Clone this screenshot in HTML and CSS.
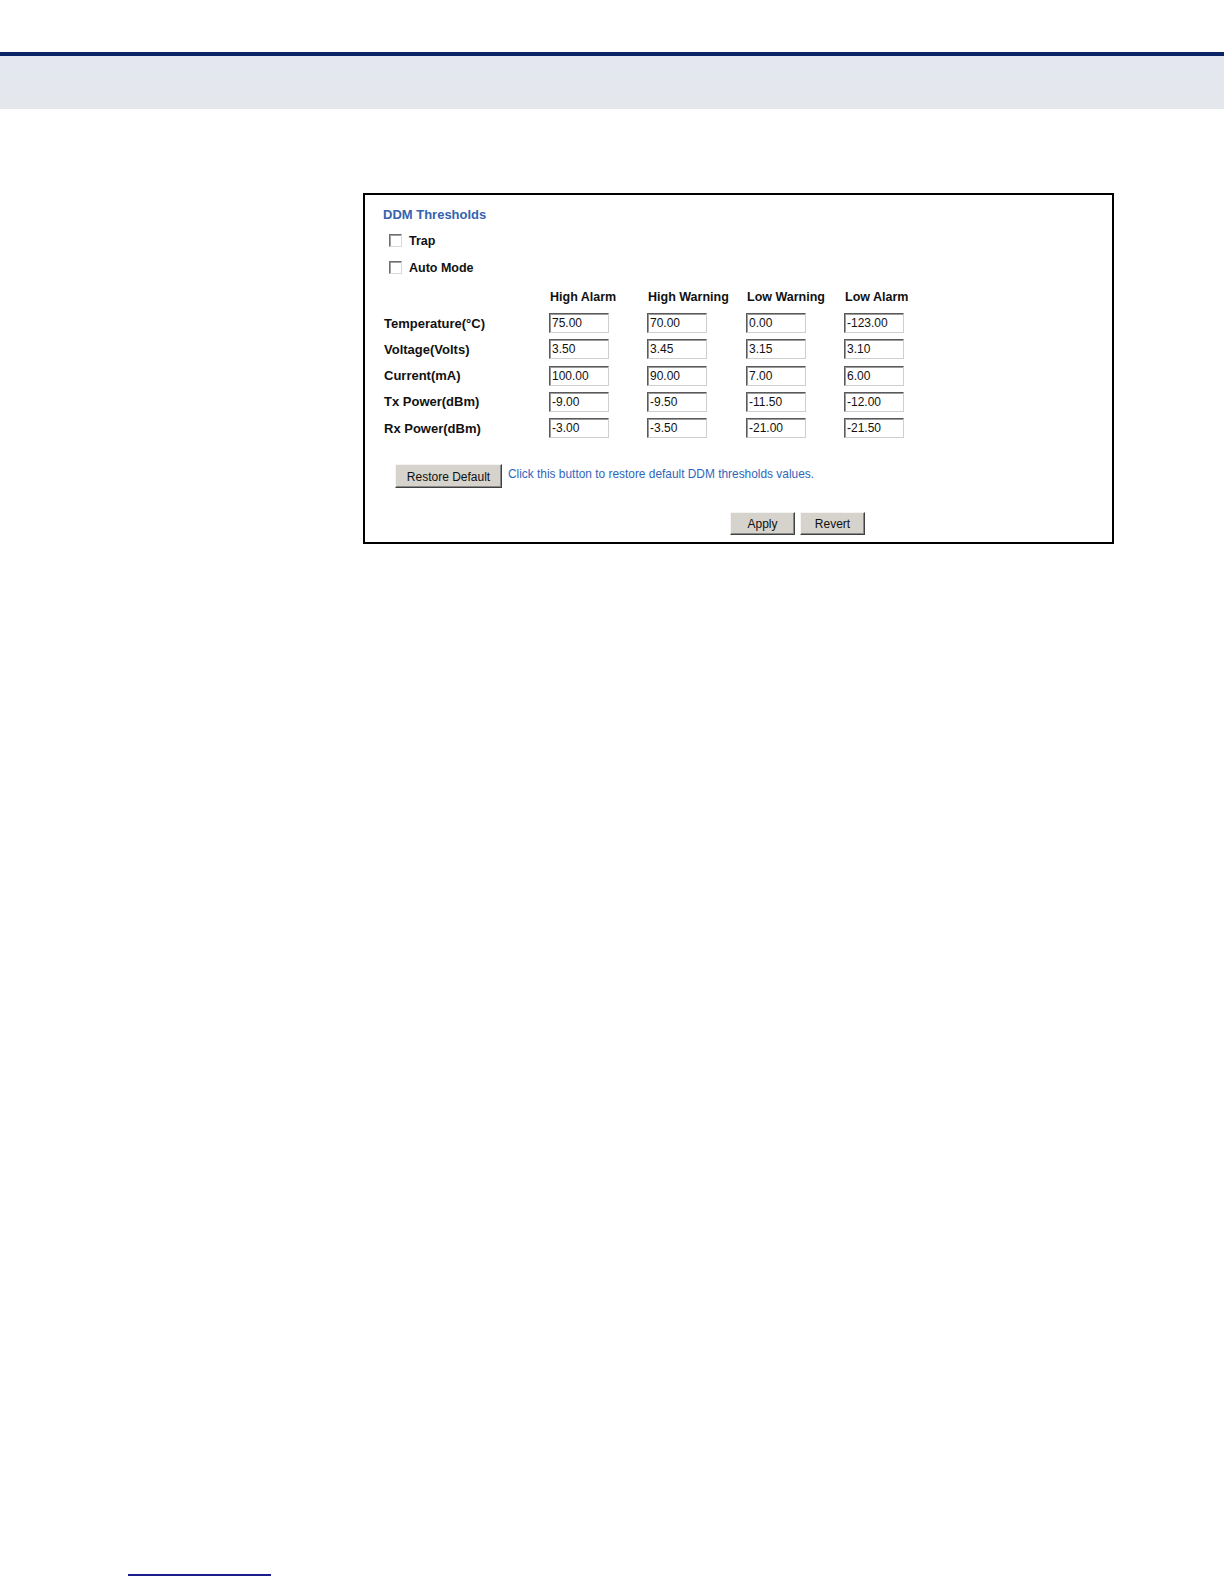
FILE: index.html
```html
<!DOCTYPE html>
<html>
<head>
<meta charset="utf-8">
<title>DDM Thresholds</title>
<link rel="stylesheet" href="styles.css">
</head>
<body>
<header class="page-head">
  <div class="head-rule"></div>
  <div class="head-band"></div>
</header>
<main class="content">
  <section class="panel">
    <h2 class="panel-title">DDM Thresholds</h2>
    <label class="check-row first"><span class="checkbox"></span><span class="check-label">Trap</span></label>
    <label class="check-row"><span class="checkbox"></span><span class="check-label">Auto Mode</span></label>
    <div class="grid">
      <div class="cell head-row"></div>
      <div class="cell head-row col-head">High Alarm</div>
      <div class="cell head-row col-head">High Warning</div>
      <div class="cell head-row col-head">Low Warning</div>
      <div class="cell head-row col-head">Low Alarm</div>

      <div class="cell row-head">Temperature(°C)</div>
      <div class="cell"><input class="field" type="text" value="75.00"></div>
      <div class="cell"><input class="field" type="text" value="70.00"></div>
      <div class="cell"><input class="field" type="text" value="0.00"></div>
      <div class="cell"><input class="field" type="text" value="-123.00"></div>

      <div class="cell row-head">Voltage(Volts)</div>
      <div class="cell"><input class="field" type="text" value="3.50"></div>
      <div class="cell"><input class="field" type="text" value="3.45"></div>
      <div class="cell"><input class="field" type="text" value="3.15"></div>
      <div class="cell"><input class="field" type="text" value="3.10"></div>

      <div class="cell row-head">Current(mA)</div>
      <div class="cell"><input class="field" type="text" value="100.00"></div>
      <div class="cell"><input class="field" type="text" value="90.00"></div>
      <div class="cell"><input class="field" type="text" value="7.00"></div>
      <div class="cell"><input class="field" type="text" value="6.00"></div>

      <div class="cell row-head">Tx Power(dBm)</div>
      <div class="cell"><input class="field" type="text" value="-9.00"></div>
      <div class="cell"><input class="field" type="text" value="-9.50"></div>
      <div class="cell"><input class="field" type="text" value="-11.50"></div>
      <div class="cell"><input class="field" type="text" value="-12.00"></div>

      <div class="cell row-head">Rx Power(dBm)</div>
      <div class="cell"><input class="field" type="text" value="-3.00"></div>
      <div class="cell"><input class="field" type="text" value="-3.50"></div>
      <div class="cell"><input class="field" type="text" value="-21.00"></div>
      <div class="cell"><input class="field" type="text" value="-21.50"></div>
    </div>
    <div class="restore-row">
      <button class="btn btn-restore" type="button">Restore Default</button>
      <span class="hint">Click this button to restore default DDM thresholds values.</span>
    </div>
    <div class="action-row">
      <button class="btn btn-apply" type="button">Apply</button>
      <button class="btn btn-revert" type="button">Revert</button>
    </div>
  </section>
</main>
<footer class="page-foot">
  <div class="foot-rule"></div>
</footer>
</body>
</html>
```
FILE: styles.css
```css
html, body {
  margin: 0;
  padding: 0;
  background: #ffffff;
}
body {
  width: 1224px;
  height: 1584px;
  font-family: "Liberation Sans", Arial, sans-serif;
  position: relative;
  overflow: hidden;
}
.page-head {
  padding-top: 52px;
}
.head-rule {
  height: 4px;
  background: #0b2465;
}
.head-band {
  height: 53px;
  background: linear-gradient(#e4e7f0, #e4e8ec);
}
.content {
  padding-top: 84px;
  padding-left: 363px;
}
.panel {
  width: 751px;
  height: 351px;
  box-sizing: border-box;
  border: 2px solid #000000;
  padding: 12px 0 0 0;
}
.panel-title {
  margin: 0 0 0 18px;
  font-size: 13px;
  line-height: 16px;
  font-weight: bold;
  color: #3563ad;
}
.check-row {
  display: flex;
  align-items: center;
  height: 27px;
  padding-left: 24px;
}
.check-row.first {
  margin-top: 4px;
}
.checkbox {
  width: 13px;
  height: 13px;
  box-sizing: border-box;
  border: 1px solid;
  border-color: #6f6f6f #d8d8d8 #d8d8d8 #6f6f6f;
  box-shadow: inset 1px 1px 0 #a0a0a0;
  background: #ffffff;
}
.check-label {
  margin-left: 7px;
  font-size: 12.5px;
  font-weight: bold;
  color: #111111;
}
.grid {
  display: grid;
  grid-template-columns: 165px 98px 99px 98px 100px;
  grid-template-rows: 26px;
  grid-auto-rows: 26.25px;
  margin-top: 3px;
  padding-left: 19px;
}
.cell {
  display: flex;
  align-items: center;
}
.col-head {
  font-size: 12.5px;
  font-weight: bold;
  color: #111111;
  padding-left: 1px;
}
.row-head {
  font-size: 13px;
  font-weight: bold;
  color: #111111;
}
.field {
  width: 60px;
  height: 20px;
  box-sizing: border-box;
  margin: 0;
  padding: 0 2px;
  border: 1px solid;
  border-color: #5a5a5a #cfcfcf #cfcfcf #5a5a5a;
  box-shadow: inset 1px 1px 0 #9a9a9a;
  font-family: "Liberation Sans", Arial, sans-serif;
  font-size: 12px;
  color: #111111;
  background: #ffffff;
}
.restore-row {
  display: flex;
  align-items: center;
  margin-top: 23px;
  padding-left: 30px;
}
.btn {
  height: 24px;
  box-sizing: border-box;
  margin: 0;
  padding: 0;
  font-family: "Liberation Sans", Arial, sans-serif;
  font-size: 12px;
  color: #111111;
  background: #d6d3cc;
  border: 1px solid;
  border-color: #f4f4f4 #404040 #404040 #f4f4f4;
  box-shadow: inset -1px -1px 0 #8a8a8a;
}
.btn-restore {
  width: 107px;
  padding-top: 2px;
}
.hint {
  margin-left: 6px;
  font-size: 11.9px;
  color: #2f66bb;
  margin-top: -4px;
}
.action-row {
  display: flex;
  gap: 5px;
  margin-top: 24px;
  padding-left: 365px;
}
.btn-apply {
  width: 65px;
  height: 23px;
}
.btn-revert {
  width: 65px;
  height: 23px;
}
.page-foot {
  position: absolute;
  left: 128px;
  top: 1574px;
}
.foot-rule {
  width: 143px;
  height: 2px;
  background: #1c1c8a;
}
```
